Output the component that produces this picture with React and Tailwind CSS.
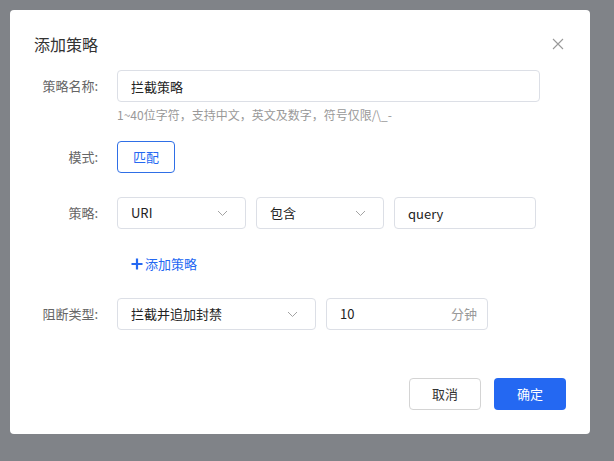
import { useState } from "react";

const font = { fontFamily: '"Noto Sans CJK SC", "Noto Sans", sans-serif' };

function Chevron() {
  return (
    <svg width="11" height="7" viewBox="0 0 11 7" fill="none" className="shrink-0">
      <path d="M1 1l4.5 4.5L10 1" stroke="#a3a3a3" strokeWidth="1" />
    </svg>
  );
}

function Select({ value, width }) {
  return (
    <div
      className={`h-[32px] ${width} flex items-center justify-between pl-[13px] pr-[17px] border border-[#dcdfe6] rounded-[4px] text-[13px] text-[#222]`}
    >
      <span>{value}</span>
      <Chevron />
    </div>
  );
}

function Label({ children }) {
  return (
    <div className="w-[83px] shrink-0 pr-[19px] text-right text-[13px] text-[#666] leading-[32px]">
      {children}
    </div>
  );
}

export default function App() {
  const [name, setName] = useState("拦截策略");
  const [keyword, setKeyword] = useState("query");
  const [minutes, setMinutes] = useState("10");

  return (
    <div className="w-[614px] h-[461px] bg-[#808388] pt-[10px] pl-[10px]" style={font}>
      <div className="w-[580px] h-[424px] bg-white rounded-[4px] flex flex-col px-[24px] pt-[22px] pb-[24px]">
        {/* Header */}
        <div className="flex items-center justify-between h-[24px]">
          <h2 className="text-[16px] text-[#333] leading-[24px]">添加策略</h2>
          <button className="w-[12px] h-[12px] mr-[2px] flex items-center justify-center cursor-pointer">
            <svg width="12" height="12" viewBox="0 0 12 12" fill="none">
              <path d="M1 1l10 10M11 1L1 11" stroke="#999" strokeWidth="1.1" />
            </svg>
          </button>
        </div>

        {/* Form */}
        <div className="mt-[14px] flex flex-col">
          <div className="flex">
            <Label>策略名称:</Label>
            <div className="flex flex-col">
              <input
                value={name}
                onChange={(e) => setName(e.target.value)}
                className="w-[423px] h-[32px] pl-[13px] border border-[#dcdfe6] rounded-[4px] text-[13px] text-[#222] outline-none"
              />
              <p className="mt-[4px] text-[12px] leading-[18px] text-[#999]">
                1~40位字符，支持中文，英文及数字，符号仅限/\_-
              </p>
            </div>
          </div>

          <div className="flex mt-[17px]">
            <Label>模式:</Label>
            <button className="w-[58px] h-[32px] border border-[#2f6fe6] rounded-[4px] text-[13px] text-[#2468f2]">
              匹配
            </button>
          </div>

          <div className="flex mt-[24px]">
            <Label>策略:</Label>
            <div className="flex gap-[10px]">
              <Select value="URI" width="w-[129px]" />
              <Select value="包含" width="w-[128px]" />
              <input
                value={keyword}
                onChange={(e) => setKeyword(e.target.value)}
                className="w-[142px] h-[32px] pl-[13px] border border-[#dcdfe6] rounded-[4px] text-[13px] text-[#222] outline-none"
              />
            </div>
          </div>

          <div className="flex mt-[26px] pl-[97px]">
            <button className="flex items-center gap-[2px] text-[13px] leading-[18px] text-[#2468f2]">
              <svg width="12" height="12" viewBox="0 0 12 12" fill="none">
                <path d="M6 0.5v11M0.5 6h11" stroke="#2468f2" strokeWidth="2.2" />
              </svg>
              添加策略
            </button>
          </div>

          <div className="flex mt-[25px]">
            <Label>阻断类型:</Label>
            <div className="flex gap-[10px]">
              <Select value="拦截并追加封禁" width="w-[199px]" />
              <div className="w-[162px] h-[32px] flex items-center justify-between pl-[13px] pr-[10px] border border-[#dcdfe6] rounded-[4px]">
                <input
                  value={minutes}
                  onChange={(e) => setMinutes(e.target.value)}
                  className="w-[80px] text-[13px] text-[#222] outline-none"
                />
                <span className="text-[13px] text-[#999]">分钟</span>
              </div>
            </div>
          </div>
        </div>

        {/* Footer */}
        <div className="mt-auto flex justify-end gap-[13px]">
          <button className="w-[72px] h-[32px] border border-[#d4d4d4] rounded-[4px] text-[13px] text-[#333]">
            取消
          </button>
          <button className="w-[72px] h-[32px] bg-[#2468f2] rounded-[4px] text-[13px] text-white">
            确定
          </button>
        </div>
      </div>
    </div>
  );
}
